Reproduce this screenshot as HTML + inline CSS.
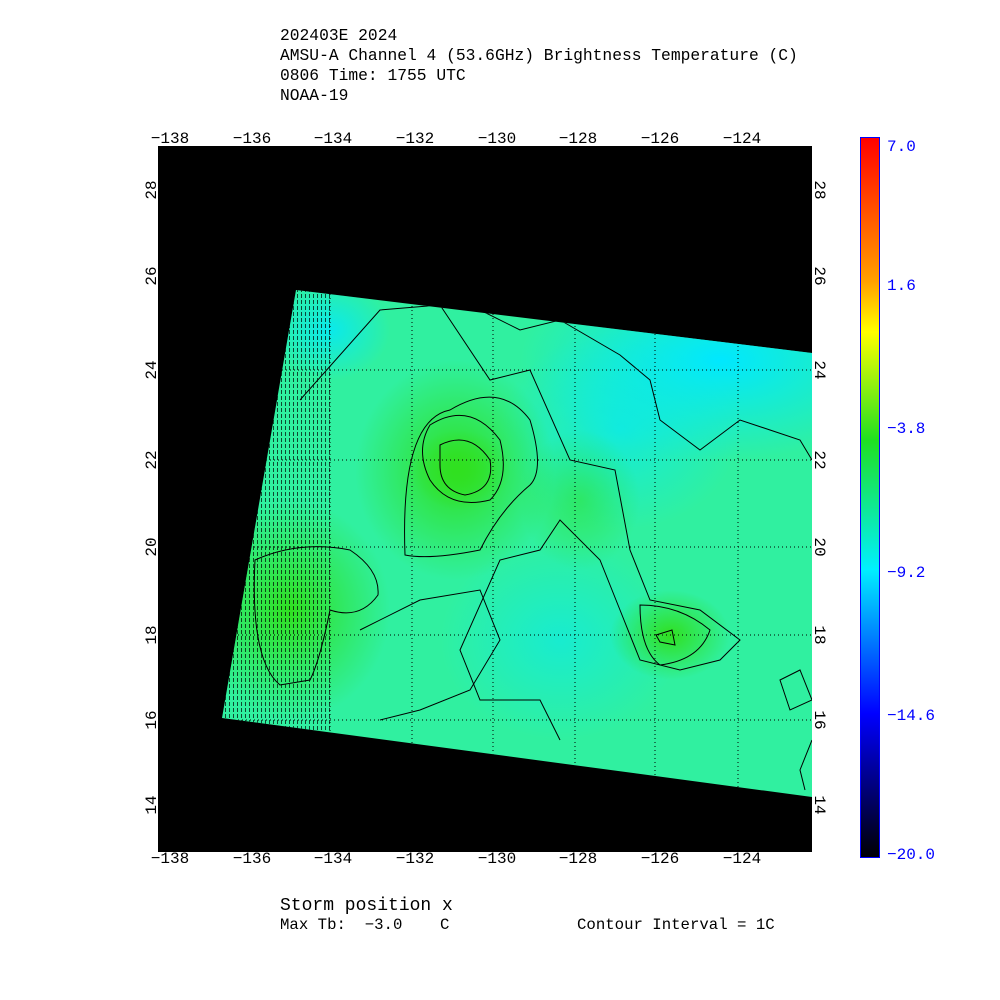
<!DOCTYPE html>
<html><head><style>
body{margin:0;background:#fff;width:1000px;height:1000px;overflow:hidden}
svg{display:block}
text{font-family:"Liberation Mono",monospace;white-space:pre}
</style></head><body>
<svg width="1000" height="1000" viewBox="0 0 1000 1000" xml:space="preserve">
<defs>
<linearGradient id="cb" x1="0" y1="0" x2="0" y2="1">
<stop offset="0" stop-color="#ff0000"/>
<stop offset="0.2" stop-color="#ffa000"/>
<stop offset="0.27" stop-color="#ffff00"/>
<stop offset="0.42" stop-color="#20e020"/>
<stop offset="0.6" stop-color="#00f0ff"/>
<stop offset="0.8" stop-color="#0000ff"/>
<stop offset="1" stop-color="#000000"/>
</linearGradient>
<clipPath id="sw"><polygon points="296,290 812,353 812,797 222,718"/></clipPath>
<radialGradient id="g1"><stop offset="0" stop-color="#30e020"/><stop offset="1" stop-color="#30e020" stop-opacity="0"/></radialGradient>
<radialGradient id="c1"><stop offset="0" stop-color="#00e8ff"/><stop offset="1" stop-color="#00e8ff" stop-opacity="0"/></radialGradient>
<pattern id="hatch" width="4" height="6" patternUnits="userSpaceOnUse"><rect x="1" y="0" width="1" height="4" fill="#000"/></pattern>
</defs>
<rect x="158" y="146" width="654" height="706" fill="#000"/>
<g clip-path="url(#sw)">
<rect x="200" y="280" width="620" height="530" fill="#30f0a0"/>
<ellipse cx="720" cy="360" rx="200" ry="100" fill="url(#c1)"/>
<ellipse cx="620" cy="430" rx="120" ry="100" fill="url(#c1)" opacity="0.6"/>
<ellipse cx="560" cy="640" rx="120" ry="100" fill="url(#c1)" opacity="0.5"/>
<ellipse cx="330" cy="330" rx="60" ry="50" fill="url(#c1)" opacity="0.8"/>
<ellipse cx="455" cy="470" rx="100" ry="110" fill="url(#g1)"/>
<ellipse cx="460" cy="470" rx="50" ry="40" fill="url(#g1)"/>
<ellipse cx="290" cy="610" rx="100" ry="110" fill="url(#g1)"/>
<ellipse cx="670" cy="635" rx="60" ry="45" fill="url(#g1)"/>
<ellipse cx="580" cy="500" rx="60" ry="70" fill="url(#g1)" opacity="0.5"/>
<rect x="220" y="280" width="110" height="450" fill="url(#hatch)" opacity="0.7"/>
<g fill="none" stroke="#000" stroke-width="1">
<path d="M430,425 Q470,400 500,440 Q510,480 490,500 Q450,510 430,480 Q415,450 430,425Z"/>
<path d="M440,445 Q470,430 490,460 Q495,490 465,495 Q440,490 440,465Z"/>
<path d="M405,555 Q400,420 450,410 Q500,380 530,420 Q545,470 530,485 Q500,510 480,550 Q430,560 405,555Z"/>
<path d="M300,400 L380,310 L440,305 L490,380 L530,370 L570,460 L615,470 L630,550 L650,600 L700,610 L740,640 L720,660 L680,670 L640,660 L620,610 L600,560 L560,520 L540,550 L500,560 L460,650 L480,700 L540,700 L560,740"/>
<path d="M480,310 L520,330 L560,320 L620,355 L650,380 L660,420 L700,450 L740,420 L800,440 L812,460"/>
<path d="M255,560 Q300,540 350,550 Q380,570 378,595 Q360,620 330,610 Q320,660 310,680 L280,685 Q250,660 255,560Z"/>
<path d="M640,605 Q680,605 710,630 Q700,660 660,665 Q640,650 640,605Z"/>
<path d="M656,635 L672,630 L675,645 L660,642Z"/>
<path d="M360,630 L420,600 L480,590 L500,640 L470,690 L420,710 L380,720"/>
<path d="M780,680 L800,670 L812,700 L790,710Z"/>
<path d="M812,740 L800,770 L805,790"/>
</g>
</g>
<g stroke="#000" stroke-width="1" stroke-dasharray="1,3" fill="none" clip-path="url(#sw)">
<line x1="330" y1="146" x2="330" y2="852"/><line x1="412" y1="146" x2="412" y2="852"/><line x1="493" y1="146" x2="493" y2="852"/><line x1="575" y1="146" x2="575" y2="852"/><line x1="655" y1="146" x2="655" y2="852"/><line x1="738" y1="146" x2="738" y2="852"/>
<line x1="158" y1="370" x2="812" y2="370"/><line x1="158" y1="460" x2="812" y2="460"/><line x1="158" y1="547" x2="812" y2="547"/><line x1="158" y1="635" x2="812" y2="635"/><line x1="158" y1="720" x2="812" y2="720"/>
</g>
<rect x="157.5" y="145.5" width="655" height="707" fill="none" stroke="#fff" stroke-width="1"/>
<g font-size="16.3" fill="#000">
<text x="280" y="40">202403E 2024</text>
<text x="280" y="60">AMSU-A Channel 4 (53.6GHz) Brightness Temperature (C)</text>
<text x="280" y="80">0806 Time: 1755 UTC</text>
<text x="280" y="100">NOAA-19</text>
</g>
<g font-size="16" fill="#000" text-anchor="middle">
<text x="170" y="143">−138</text><text x="252" y="143">−136</text><text x="333" y="143">−134</text><text x="415" y="143">−132</text><text x="497" y="143">−130</text><text x="578" y="143">−128</text><text x="660" y="143">−126</text><text x="742" y="143">−124</text>
<text x="170" y="863">−138</text><text x="252" y="863">−136</text><text x="333" y="863">−134</text><text x="415" y="863">−132</text><text x="497" y="863">−130</text><text x="578" y="863">−128</text><text x="660" y="863">−126</text><text x="742" y="863">−124</text>
</g>
<g font-size="16" fill="#000" text-anchor="middle">
<text transform="translate(156,190) rotate(-90)">28</text><text transform="translate(156,276) rotate(-90)">26</text><text transform="translate(156,370) rotate(-90)">24</text><text transform="translate(156,460) rotate(-90)">22</text><text transform="translate(156,547) rotate(-90)">20</text><text transform="translate(156,635) rotate(-90)">18</text><text transform="translate(156,720) rotate(-90)">16</text><text transform="translate(156,805) rotate(-90)">14</text>
<text transform="translate(815,190) rotate(90)">28</text><text transform="translate(815,276) rotate(90)">26</text><text transform="translate(815,370) rotate(90)">24</text><text transform="translate(815,460) rotate(90)">22</text><text transform="translate(815,547) rotate(90)">20</text><text transform="translate(815,635) rotate(90)">18</text><text transform="translate(815,720) rotate(90)">16</text><text transform="translate(815,805) rotate(90)">14</text>
</g>
<rect x="860.5" y="137.5" width="19" height="720" fill="url(#cb)" stroke="#0000ff"/>
<g font-size="16" fill="#0000ff">
<text x="887" y="151">7.0</text><text x="887" y="290">1.6</text><text x="887" y="433">−3.8</text><text x="887" y="577">−9.2</text><text x="887" y="720">−14.6</text><text x="887" y="859">−20.0</text>
</g>
<g font-size="18" fill="#000"><text x="280" y="910">Storm position x</text></g>
<g font-size="15.7" fill="#000"><text x="280" y="929">Max Tb:  −3.0    C</text><text x="577" y="929">Contour Interval = 1C</text></g>
</svg>
</body></html>
